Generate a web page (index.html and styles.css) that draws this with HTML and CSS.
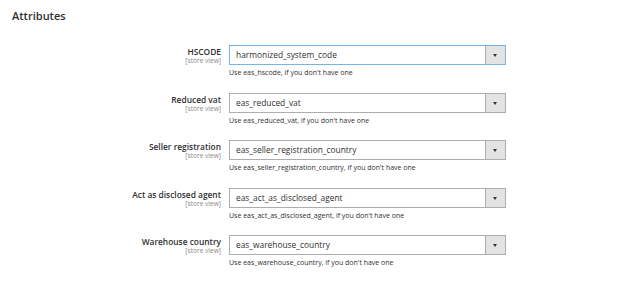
FILE: index.html
```html
<!DOCTYPE html>
<html lang="en">
<head>
  <meta charset="UTF-8">
  <title>Attributes</title>
  <link rel="stylesheet" href="styles.css">
</head>
<body>
  <div class="section">
    <h2 class="section-title">Attributes</h2>
    <div class="fields">
      <div class="field">
        <div class="label">
          <span class="label-text">HSCODE</span>
          <span class="scope">[store view]</span>
        </div>
        <div class="control">
          <div class="select focused">
            <span class="value">harmonized_system_code</span>
            <span class="arrow"></span>
          </div>
          <div class="note">Use eas_hscode, if you don't have one</div>
        </div>
      </div>
      <div class="field">
        <div class="label">
          <span class="label-text">Reduced vat</span>
          <span class="scope">[store view]</span>
        </div>
        <div class="control">
          <div class="select">
            <span class="value">eas_reduced_vat</span>
            <span class="arrow"></span>
          </div>
          <div class="note">Use eas_reduced_vat, if you don't have one</div>
        </div>
      </div>
      <div class="field">
        <div class="label">
          <span class="label-text">Seller registration</span>
          <span class="scope">[store view]</span>
        </div>
        <div class="control">
          <div class="select">
            <span class="value">eas_seller_registration_country</span>
            <span class="arrow"></span>
          </div>
          <div class="note">Use eas_seller_registration_country, if you don't have one</div>
        </div>
      </div>
      <div class="field">
        <div class="label">
          <span class="label-text">Act as disclosed agent</span>
          <span class="scope">[store view]</span>
        </div>
        <div class="control">
          <div class="select">
            <span class="value">eas_act_as_disclosed_agent</span>
            <span class="arrow"></span>
          </div>
          <div class="note">Use eas_act_as_disclosed_agent, if you don't have one</div>
        </div>
      </div>
      <div class="field">
        <div class="label">
          <span class="label-text">Warehouse country</span>
          <span class="scope">[store view]</span>
        </div>
        <div class="control">
          <div class="select">
            <span class="value">eas_warehouse_country</span>
            <span class="arrow"></span>
          </div>
          <div class="note">Use eas_warehouse_country, if you don't have one</div>
        </div>
      </div>
    </div>
  </div>
</body>
</html>
```

FILE: styles.css
```css
body {
  margin: 0;
  background-color: #fff;
  font-family: "Open Sans", Arial, sans-serif;
  color: #303030;
}

.section {
  padding: 8px 12px;
}

.section-title {
  margin: 0;
  font-size: 11px;
  font-weight: 600;
  line-height: 15px;
  color: #303030;
}

.fields {
  margin-top: 22px;
}

.field {
  display: grid;
  grid-template-columns: 209px 277px;
  column-gap: 8px;
  margin-bottom: 14.5px;
}

.label {
  display: flex;
  flex-direction: column;
  align-items: flex-end;
  padding-top: 1px;
}

.label-text {
  font-size: 8.4px;
  font-weight: 600;
  line-height: 11px;
  color: #303030;
}

.scope {
  font-size: 6.6px;
  line-height: 8px;
  color: #8a8a8a;
}

.select {
  height: 20px;
  box-sizing: border-box;
  border: 1px solid #adadad;
  display: flex;
  align-items: stretch;
  background-color: #fff;
}

.select.focused {
  border-color: #79b4e6;
}

.value {
  flex: 1;
  padding-left: 6px;
  font-size: 8.4px;
  line-height: 18px;
  color: #303030;
}

.arrow {
  width: 19px;
  background-color: #e3e3e3;
  border-left: 1px solid #adadad;
  position: relative;
}

.arrow::after {
  content: "";
  position: absolute;
  left: 7px;
  top: 8px;
  border-left: 2.5px solid transparent;
  border-right: 2.5px solid transparent;
  border-top: 3px solid #333;
}

.note {
  margin-top: 3px;
  font-size: 7px;
  line-height: 10px;
  color: #303030;
}
```
